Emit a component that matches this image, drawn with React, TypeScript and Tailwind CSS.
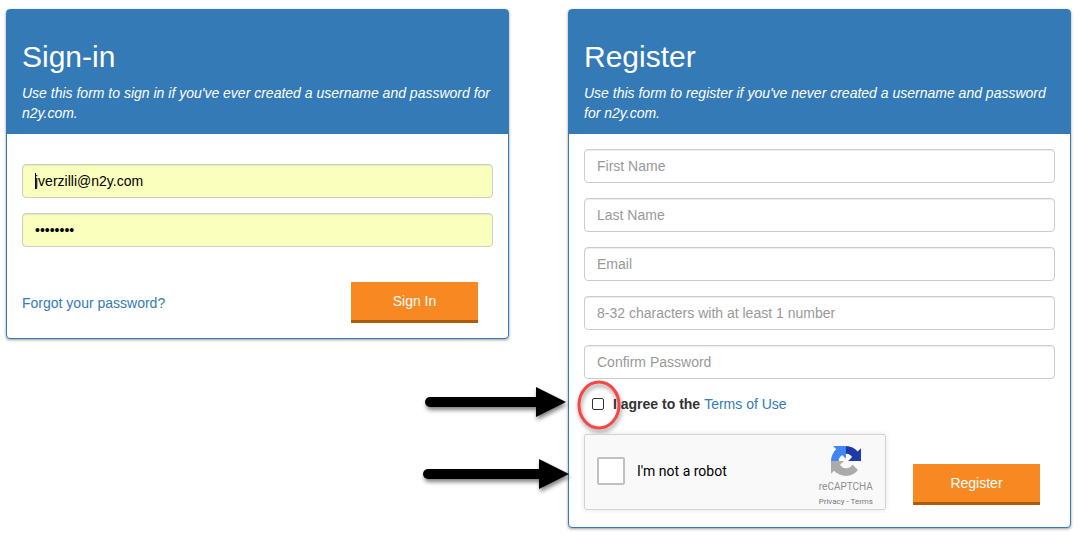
import { useState } from 'react';
import type { ComponentProps, ReactNode } from 'react';
import { clsx } from 'clsx';

const registerFields = [
  { id: 'first-name', type: 'text', placeholder: 'First Name' },
  { id: 'last-name', type: 'text', placeholder: 'Last Name' },
  { id: 'register-email', type: 'email', placeholder: 'Email' },
  { id: 'register-password', type: 'password', placeholder: '8-32 characters with at least 1 number' },
  { id: 'confirm-password', type: 'password', placeholder: 'Confirm Password' },
];

function Panel({ title, description, children }: { title: string; description: string; children: ReactNode }) {
  return (
    <section className="rounded border border-[#337ab7] bg-white shadow-[0_1px_3px_rgba(0,0,0,0.4)]">
      <header className="border-b border-[#337ab7] bg-[#337ab7] px-[15px] pt-[30px] pb-[10px] text-white">
        <h2 className="mb-[10px] text-[30px] leading-[33px]">{title}</h2>
        <p className="italic">{description}</p>
      </header>
      {children}
    </section>
  );
}

function TextField({ className, ...props }: ComponentProps<'input'>) {
  return (
    <input
      className={clsx(
        'block h-[34px] w-full rounded border border-[#ccc] px-3 shadow-[inset_0_1px_1px_rgba(0,0,0,0.075)] outline-none placeholder:text-[#999]',
        className
      )}
      {...props}
    />
  );
}

function SubmitButton({ className, children }: { className?: string; children: ReactNode }) {
  return (
    <button
      type="submit"
      className={clsx('h-[41px] w-[127px] border-b-3 border-[#b05a0c] bg-[#f88922] text-white', className)}
    >
      {children}
    </button>
  );
}

function Arrow({ tail = 5, className }: { tail?: number; className?: string }) {
  return (
    <svg
      viewBox="0 0 146 30"
      className={clsx('pointer-events-none absolute h-[30px] w-[146px] overflow-visible drop-shadow-[1px_3px_2px_rgba(0,0,0,0.5)]', className)}
      aria-hidden="true"
    >
      <path d={`M${tail} 15H119`} stroke="#000" strokeWidth="10" strokeLinecap="round" />
      <path d="M116 0l30 15-30 15z" />
    </svg>
  );
}

function RecaptchaLogo() {
  return (
    <svg viewBox="0 0 64 64" className="h-[30px] w-[30px]" aria-hidden="true">
      <path
        fill="#1c3aa9"
        d="M64 31.955l-.033-1.37V4.687l-7.16 7.16C50.948 4.674 42.033.093 32.05.093c-10.4 0-19.622 4.96-25.458 12.64l11.736 11.86a15.55 15.55 0 0 1 4.754-5.334c2.05-1.6 4.952-2.906 8.968-2.906.485 0 .86.057 1.135.163 4.976.393 9.288 3.14 11.828 7.124l-8.307 8.307L64 31.953"
      />
      <path
        fill="#4285f4"
        d="M31.862.094l-1.37.033H4.594l7.16 7.16C4.58 13.147 0 22.06 0 32.046c0 10.4 4.96 19.622 12.64 25.458L24.5 45.768a15.55 15.55 0 0 1-5.334-4.754c-1.6-2.05-2.906-4.952-2.906-8.968 0-.485.057-.86.163-1.135.393-4.976 3.14-9.288 7.124-11.828l8.307 8.307L31.86.095"
      />
      <path
        fill="#ababab"
        d="M.001 32.045l.033 1.37v25.898l7.16-7.16c5.86 7.173 14.774 11.754 24.76 11.754 10.4 0 19.622-4.96 25.458-12.64l-11.736-11.86a15.55 15.55 0 0 1-4.754 5.334c-2.05 1.6-4.952 2.906-8.968 2.906-.485 0-.86-.057-1.135-.163-4.976-.393-9.288-3.14-11.828-7.124l8.307-8.307c-10.522.04-22.4.066-27.295-.005"
      />
    </svg>
  );
}

function Recaptcha() {
  return (
    <div className="flex w-[302px] justify-between rounded-[3px] border border-[#d3d3d3] bg-[#f9f9f9] px-3 pb-[2px] font-[Roboto,sans-serif] shadow-[0_0_4px_1px_rgba(0,0,0,0.08)]">
      <div className="flex h-[72px] items-center gap-3">
        <input
          id="not-robot"
          type="checkbox"
          className="h-7 w-7 appearance-none rounded-[2px] border-2 border-[#c1c1c1] bg-white checked:bg-[#4285f4]"
        />
        <label htmlFor="not-robot" className="text-black">
          I'm not a robot
        </label>
      </div>
      <div className="flex flex-col items-center pt-[11px]">
        <RecaptchaLogo />
        <span className="mt-[5px] text-[10px] leading-3 text-[#8f8f8f]">reCAPTCHA</span>
        <span className="mt-1 text-[8px] leading-[10px] text-[#777]">
          <a href="#privacy">Privacy</a> - <a href="#terms">Terms</a>
        </span>
      </div>
    </div>
  );
}

function SignIn() {
  const [email, setEmail] = useState('jverzilli@n2y.com');
  const [password, setPassword] = useState('password');

  return (
    <Panel title="Sign-in" description="Use this form to sign in if you've ever created a username and password for n2y.com.">
      <form className="px-[15px] pt-[30px] pb-[15px]" onSubmit={(e) => e.preventDefault()}>
        <div className="relative mb-[15px]">
          <TextField
            type="email"
            aria-label="Email"
            className="bg-[#faffbd] text-black"
            value={email}
            onChange={(e) => setEmail(e.target.value)}
          />
          {/* Text cursor */}
          <span className="pointer-events-none absolute top-[9px] left-[13px] h-4 w-px bg-black" />
        </div>
        <TextField
          type="password"
          aria-label="Password"
          className="bg-[#faffbd] text-black"
          value={password}
          onChange={(e) => setPassword(e.target.value)}
        />
        <div className="mt-[35px] flex items-center justify-between pr-[15px]">
          <a href="#forgot" className="text-[#337ab7]">
            Forgot your password?
          </a>
          <SubmitButton>Sign In</SubmitButton>
        </div>
      </form>
    </Panel>
  );
}

function Register() {
  return (
    <Panel title="Register" description="Use this form to register if you've never created a username and password for n2y.com.">
      <form className="px-[15px] pt-[15px] pb-[17px]" onSubmit={(e) => e.preventDefault()}>
        <div className="flex flex-col gap-[15px]">
          {registerFields.map((field) => (
            <TextField key={field.id} aria-label={field.placeholder} {...field} />
          ))}
        </div>

        <div className="relative mt-[15px] flex items-center pl-2">
          <input
            id="agree"
            type="checkbox"
            className="mr-[9px] h-3 w-3 appearance-none rounded-[2px] border border-[#333] bg-white checked:bg-[#337ab7]"
          />
          <label htmlFor="agree" className="font-bold">
            I agree to the
          </label>
          <a href="#terms-of-use" className="ml-1 text-[#337ab7]">
            Terms of Use
          </a>
          {/* Callouts */}
          <svg
            viewBox="0 0 44 50"
            className="pointer-events-none absolute -top-[14px] -left-[7px] h-[50px] w-11 overflow-visible drop-shadow-[1px_3px_2px_rgba(0,0,0,0.4)]"
            aria-hidden="true"
          >
            <ellipse cx="22" cy="25" rx="20" ry="23" fill="none" stroke="#f84545" strokeWidth="3" />
          </svg>
          <Arrow tail={10} className="right-full -top-[7px] mr-[18px]" />
        </div>

        <div className="relative mt-5 flex items-start justify-between pr-[15px]">
          <Recaptcha />
          <SubmitButton className="mt-[30px]">Register</SubmitButton>
          <Arrow className="right-full top-[25px] mr-[15px]" />
        </div>
      </form>
    </Panel>
  );
}

export default function App() {
  return (
    <main className="grid grid-cols-2 items-start gap-[59px] bg-white pt-[9px] pr-[21px] pb-7 pl-[6px] font-['Liberation_Sans',Arial,sans-serif] text-[14px] leading-5 text-[#333]">
      <SignIn />
      <Register />
    </main>
  );
}
